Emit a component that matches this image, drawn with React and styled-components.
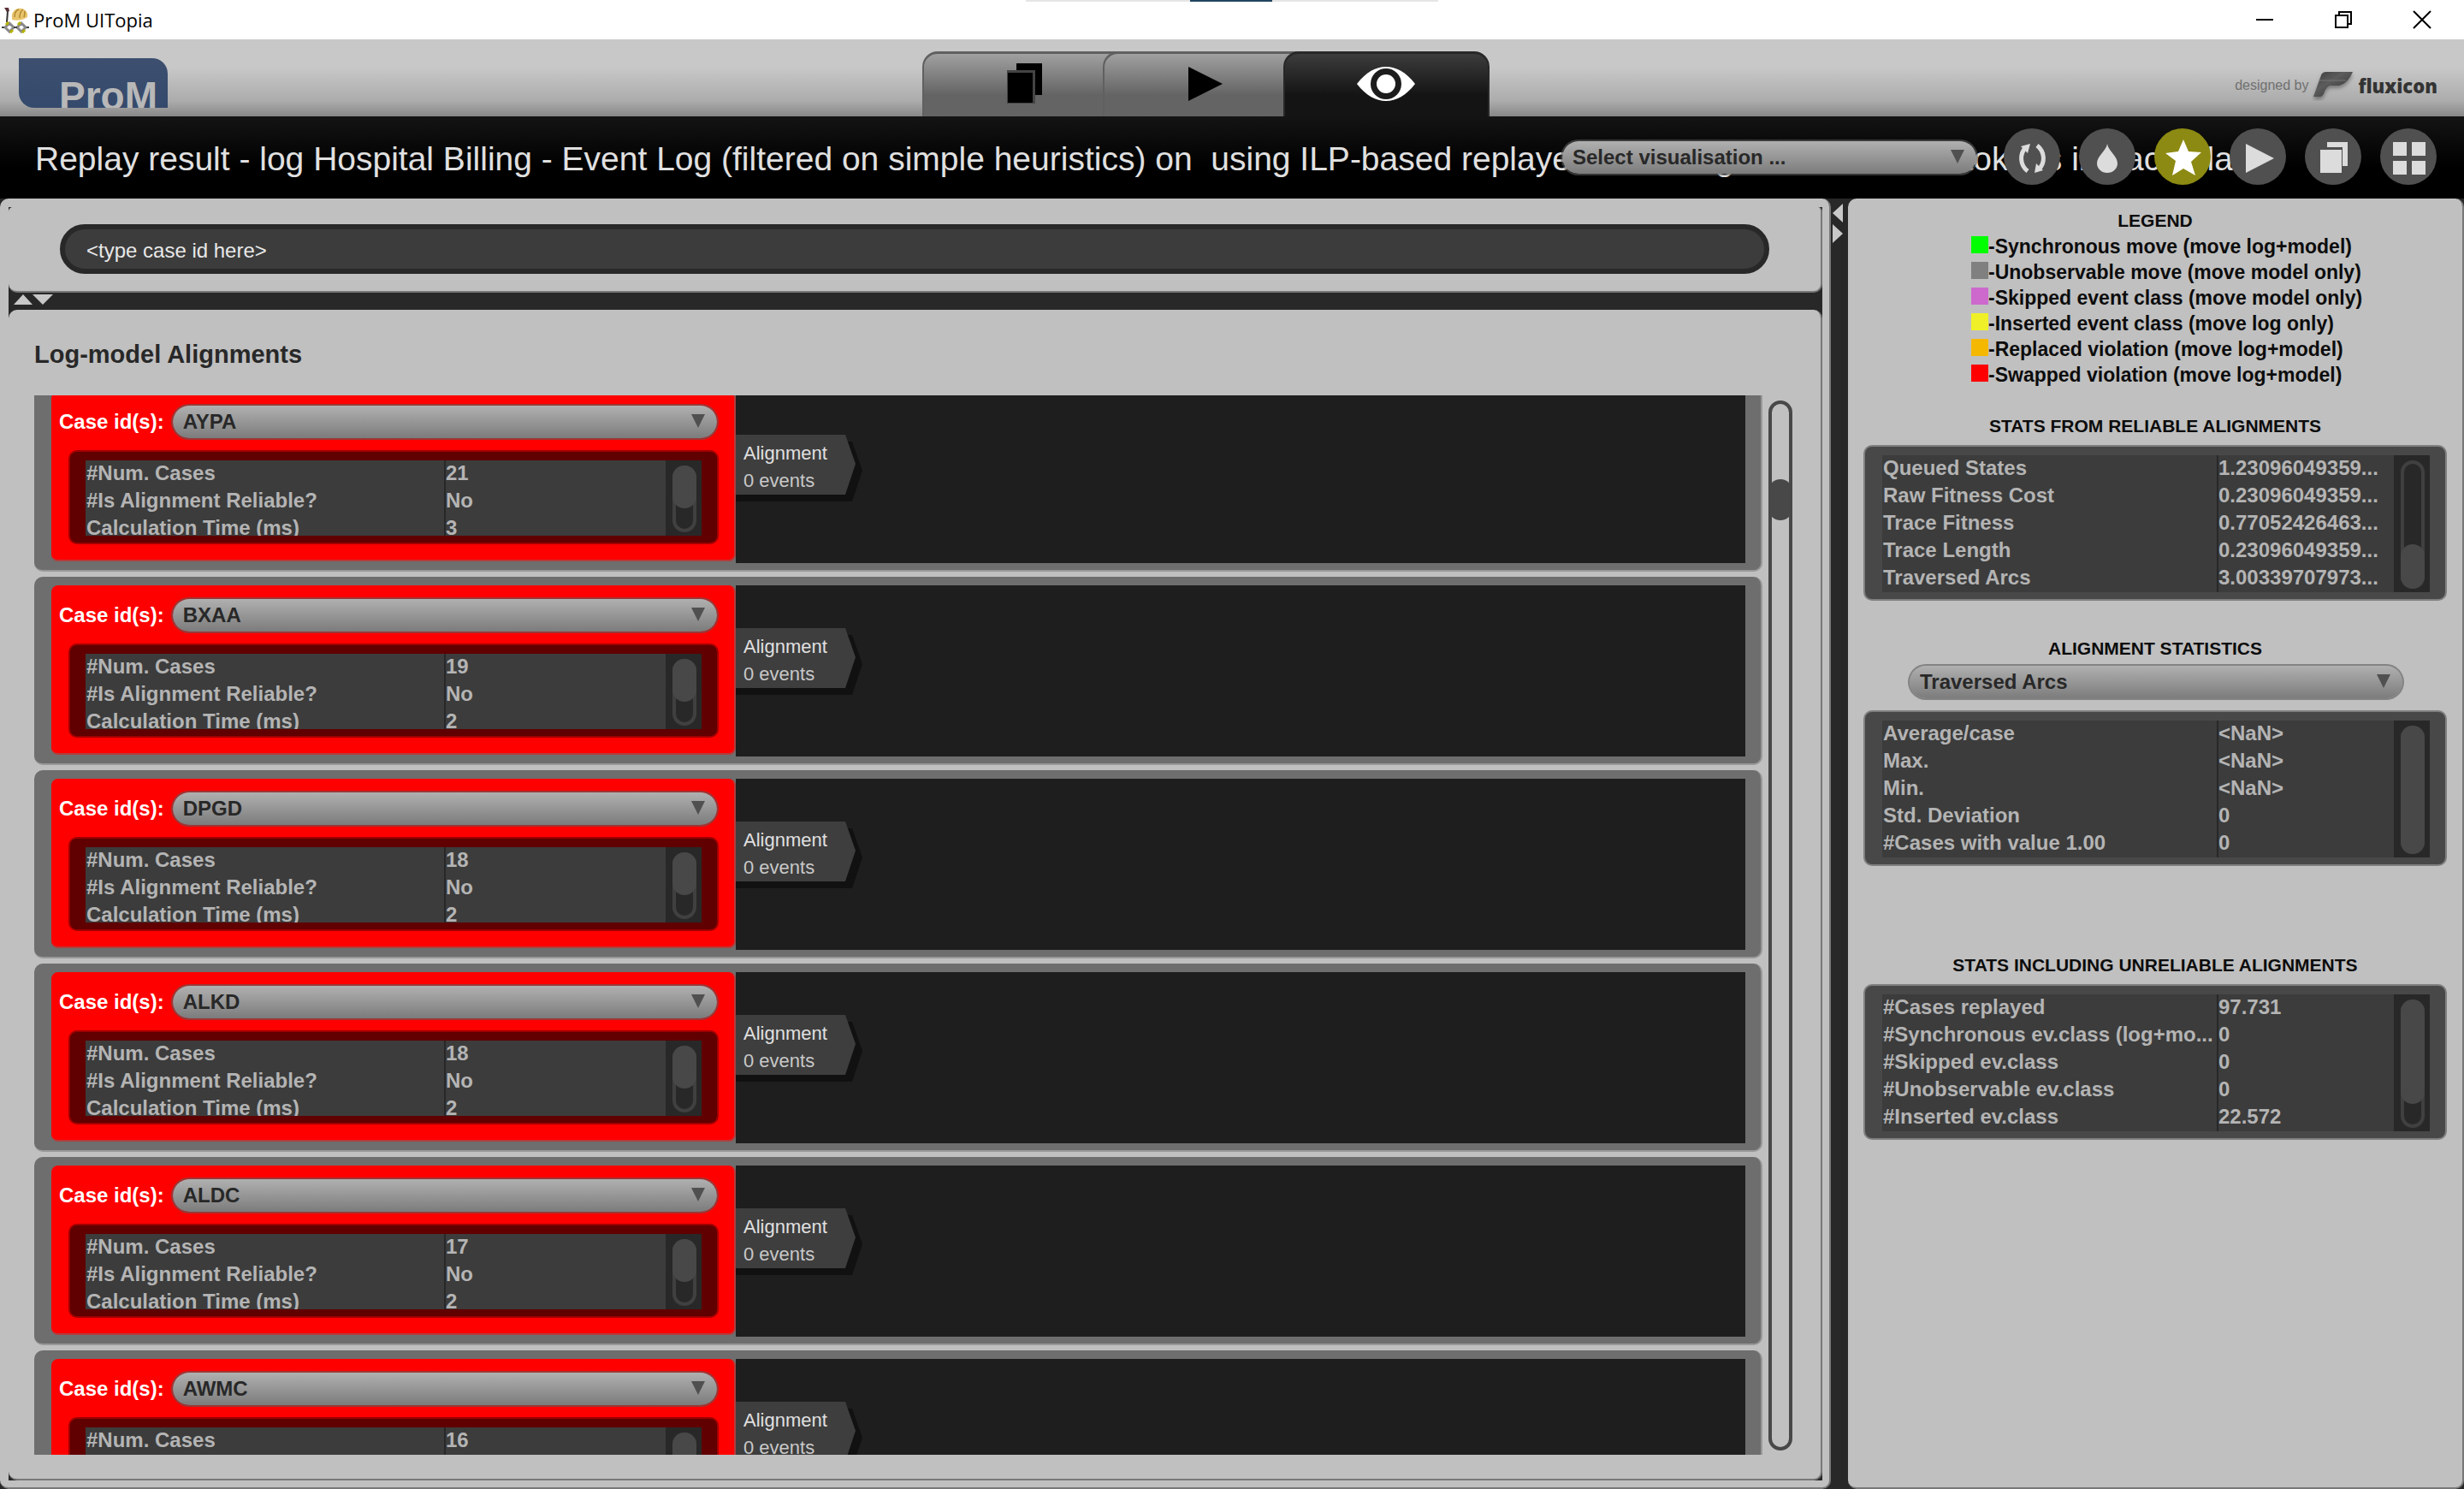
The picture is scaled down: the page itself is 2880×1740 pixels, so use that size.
import React, { useLayoutEffect, useRef } from "react";
import styled, { createGlobalStyle, css } from "styled-components";

const color = {
  panel: "#c0c0c0",
  gap: "#282828",
  edge: "#787878",
  well: "#3c3c3c",
  box: "#484848",
  cell: "#b4b4b4",
};

const GlobalStyle = createGlobalStyle`
  *, *::before, *::after { box-sizing: border-box; }
  body {
    margin: 0;
    background: ${color.gap};
    font-family: "Liberation Sans", Arial, sans-serif;
  }
  button, input, select { font: inherit; margin: 0; }
`;

const Shell = styled.div`
  height: 100vh;
  display: flex;
  flex-direction: column;
  overflow: hidden;
`;

/* ---------- window title bar ---------- */

const TitleBar = styled.header`
  position: relative;
  flex: none;
  height: 46px;
  display: flex;
  align-items: center;
  justify-content: space-between;
  padding: 0 17px 0 2px;
  background: #fff;
`;

const AppName = styled.div`
  display: flex;
  align-items: center;
  gap: 5px;
  font: 22px/32px "Open Sans", "Noto Sans", sans-serif;
  color: #000;
`;

const WindowButtons = styled.div`
  display: flex;
  gap: 28px;
`;

const WindowButton = styled.button`
  width: 64px;
  height: 44px;
  padding: 0;
  border: 0;
  background: none;
  display: grid;
  place-items: center;
`;

const DockHandle = styled.div`
  position: absolute;
  top: 0;
  left: 50%;
  width: 482px;
  height: 2px;
  transform: translateX(-50%);
  background: linear-gradient(90deg, #e5e5e5 192px, #21445f 192px 288px, #e5e5e5 288px);
`;

/* ---------- brand bar with tabs ---------- */

const BrandBar = styled.div`
  flex: none;
  height: 90px;
  display: flex;
  justify-content: space-between;
  padding: 0 31px 0 22px;
  background: linear-gradient(#c8c8c8 0 32px, #acacac 72px, #888888 90px);
`;

const Logo = styled.div`
  width: 174px;
  height: 58px;
  margin-top: 22px;
  padding-left: 47px;
  overflow: hidden;
  border-radius: 0 18px 0 18px;
  background: linear-gradient(#3d4f6f, #344a6c);
  color: #b8b8b8;
  font: bold 46px/72px "Liberation Sans", Arial, sans-serif;
`;

const LogoText = styled.span`
  display: block;
  padding-top: 8px;
`;

const Tabs = styled.nav`
  display: flex;
  align-self: flex-end;
  height: 76px;
  margin-left: 10px;
`;

const Tab = styled.button`
  width: 231px;
  padding: 0 0 4px 8px;
  display: grid;
  place-items: center;
  border: 2px solid #606060;
  border-width: 3px 0 0 2px;
  border-radius: 18px 0 0 0;
  background: linear-gradient(#a0a0a0, #646464 48px);
  & + & { margin-left: -20px; }
  ${(p) =>
    p.$active &&
    css`
      width: 241px;
      padding-left: 0;
      border-color: #282828;
      border-right-width: 2px;
      border-radius: 18px 18px 0 0;
      background: linear-gradient(#3c3c3c, #141414 48px);
    `}
`;

const Credit = styled.div`
  display: flex;
  align-items: center;
  gap: 4px;
  padding-top: 18px;
  font-size: 16px;
  color: #707070;
`;

const CreditName = styled.strong`
  font: 800 22px/28px "Open Sans", sans-serif;
  color: #333;
`;

/* ---------- black heading bar ---------- */

const HeadingBar = styled.div`
  position: relative;
  flex: none;
  height: 96px;
  padding-left: 41px;
  overflow: hidden;
  background: linear-gradient(#141414, #000 60px);
`;

const Heading = styled.h1`
  margin: 0;
  font-size: 39px;
  font-weight: 400;
  line-height: 100px;
  white-space: pre;
  color: #e0e0e0;
`;

const HeadingTools = styled.div`
  position: absolute;
  top: 14px;
  right: 32px;
  display: flex;
  align-items: center;
  gap: 22px;
`;

const RoundButton = styled.button`
  width: 66px;
  height: 66px;
  padding: 0;
  border: 0;
  border-radius: 50%;
  display: grid;
  place-items: center;
  background: ${(p) => (p.$active ? "#8c8a12" : "#505050")};
  svg { display: block; }
`;

const PickerSlot = styled.div`
  width: 488px;
  margin-right: 8px;
  padding-top: 2px;
`;

/* ---------- drop-down ---------- */

const SelectWrap = styled.div`
  position: relative;
  width: 100%;
  height: 42px;
`;

const SelectBox = styled.select`
  appearance: none;
  display: block;
  width: 100%;
  height: 42px;
  padding: 0 48px 0 12px;
  border: 2px solid rgba(90, 90, 90, 0.6);
  border-radius: 21px;
  background: linear-gradient(#b0b0b0, #7c7c7c);
  background-clip: padding-box;
  font-size: 24px;
  font-weight: 700;
  line-height: 38px;
  color: #282828;
`;

const SelectArrow = styled.svg`
  position: absolute;
  right: 16px;
  top: 12px;
  pointer-events: none;
`;

/* ---------- split panes ---------- */

const Workspace = styled.main`
  flex: 1;
  min-height: 0;
  display: grid;
  grid-template-columns: minmax(0, 107fr) 20px minmax(0, 36fr);
  background: ${color.gap};
`;

const paneEdge = css`
  background: ${color.panel};
  border: 0 solid ${color.edge};
  border-width: 0 2px 2px 0;
  border-radius: 10px;
`;

const LeftPane = styled.section`
  ${paneEdge}
  min-height: 0;
  padding: 10px 8px 8px 10px;
`;

const LeftSplit = styled.div`
  height: 100%;
  display: flex;
  flex-direction: column;
  background: ${color.gap};
`;

const SearchPane = styled.div`
  ${paneEdge}
  flex: none;
  padding: 20px 60px;
  border-radius: 5px 5px 10px 10px;
`;

const SearchInput = styled.input`
  display: block;
  width: 100%;
  height: 58px;
  padding: 4px 25px 0;
  border: 6px solid #282828;
  border-radius: 29px;
  background: ${color.well};
  color: #e8e8e8;
  font-size: 24px;
  outline: 0;
`;

const Divider = styled.div`
  flex: none;
  display: flex;
  gap: ${(p) => (p.$vertical ? 2 : 0)}px;
  flex-direction: ${(p) => (p.$vertical ? "column" : "row")};
  padding: ${(p) => (p.$vertical ? "6px 2px" : "2px 6px")};
  height: ${(p) => (p.$vertical ? "auto" : "20px")};
  svg { display: block; }
`;

const ListPane = styled.div`
  ${paneEdge}
  flex: 1;
  min-height: 0;
  display: flex;
  flex-direction: column;
  padding: 32px 30px 28px;
`;

const ListTitle = styled.h2`
  margin: 0 0 28px;
  font-size: 29px;
  line-height: 40px;
  color: #282828;
`;

const ListRow = styled.div`
  flex: 1;
  min-height: 0;
  display: flex;
  gap: 7px;
`;

const Viewport = styled.div`
  flex: 1;
  overflow-y: auto;
  scrollbar-width: none;
  display: flex;
  flex-direction: column;
  gap: 6px;
`;

const ScrollColumn = styled.div`
  width: 28px;
  margin-right: 3px;
  padding: 6px 0 5px;
`;

/* ---------- scroll indicator ---------- */

const Track = styled.div`
  width: 28px;
  height: 100%;
  padding-top: ${(p) => p.$offset}px;
  border: 4px solid ${(p) => p.$line};
  border-radius: 14px;
`;

const Thumb = styled.div`
  width: 28px;
  height: ${(p) => p.$size};
  margin: -4px;
  border-radius: 14px;
  background: ${color.box};
`;

/* ---------- case cards ---------- */

const Card = styled.article`
  flex: none;
  display: flex;
  padding: 10px 18px 8px 20px;
  border: 0 solid #989898;
  border-width: 0 2px 2px 0;
  border-radius: 10px;
  background: #6e6e6e;
`;

const CaseInfo = styled.div`
  width: 800px;
  height: 198px;
  padding: 14px 18px 18px 8px;
  border: 0 solid #b43c3c;
  border-width: 0 2px 2px 0;
  border-radius: 8px;
  background: #f00;
`;

const CaseField = styled.label`
  display: flex;
  align-items: center;
  gap: 8px;
  padding-left: 1px;
  white-space: nowrap;
  color: #fff;
  font-size: 24px;
  font-weight: 700;
`;

const CaseStats = styled.div`
  margin: 12px 0 0 12px;
`;

const Lane = styled.div`
  flex: 1;
  height: 200px;
  padding-top: 50px;
  background: #1e1e1e;
`;

const Tag = styled.div`
  position: relative;
  width: 148px;
  height: 78px;
  svg { position: absolute; left: 0; top: 0; }
`;

const TagText = styled.p`
  position: relative;
  margin: 0;
  padding-left: 9px;
  font-size: 22px;
  line-height: 32px;
  color: ${(p) => (p.$soft ? "#c8c8c8" : "#e0e0e0")};
  &:nth-of-type(1) { padding-top: 6px; }
`;

/* ---------- statistics box ---------- */

const Box = styled.div`
  display: flex;
  height: ${(p) => p.$height}px;
  padding: 10px 18px 8px ${(p) => (p.$alarm ? 18 : 20)}px;
  border: 2px solid ${(p) => (p.$alarm ? "#a00000" : "#808080")};
  border-radius: 10px;
  background: ${(p) => (p.$alarm ? "#600000" : color.box)};
`;

const TableClip = styled.div`
  flex: 1;
  min-width: 0;
  overflow: hidden;
  background: ${color.well};
`;

const Table = styled.table`
  width: 100%;
  table-layout: fixed;
  border-collapse: collapse;
  color: ${color.cell};
  font-size: 24px;
  font-weight: 700;
  line-height: 30px;
`;

const NameCell = styled.th`
  width: ${(p) => p.$width}px;
  height: 32px;
  padding: 0 0 2px 1px;
  border-right: 2px solid ${color.gap};
  text-align: left;
  white-space: nowrap;
  overflow: hidden;
`;

const ValueCell = styled.td`
  padding: 0 0 2px;
  white-space: nowrap;
  overflow: hidden;
`;

const Gutter = styled.div`
  width: 42px;
  padding: 6px 6px 4px 8px;
  background: ${color.gap};
`;

/* ---------- right pane ---------- */

const RightPane = styled.aside`
  ${paneEdge}
  min-height: 0;
  overflow: hidden;
  padding: 11px 18px;
  font-size: 21px;
  line-height: 30px;
  color: #0c0c0c;
`;

const Group = styled.section`
  margin-bottom: ${(p) => p.$space}px;
`;

const GroupTitle = styled.h3`
  margin: 0;
  font-size: 21px;
  line-height: 30px;
  text-align: center;
  padding-bottom: ${(p) => (p.$roomy ? 7 : 0)}px;
`;

const Legend = styled.ul`
  width: 430px;
  margin: 0 auto;
  padding: 0;
  list-style: none;
  font-size: 23px;
  font-weight: 700;
  white-space: nowrap;
`;

const LegendItem = styled.li`
  display: flex;
  align-items: flex-start;
  line-height: 30px;
`;

const Swatch = styled.span`
  flex: none;
  width: 20px;
  height: 20px;
  margin-top: 3px;
  background: ${(p) => p.$fill};
`;

const StatPicker = styled.div`
  margin: 3px 50px 12px 52px;
`;

/* ---------- drawings ---------- */

const AppIcon = () => (
  <svg width="32" height="32" viewBox="0 0 32 32" fill="none">
    <path d="M3 2h5l1 4-3 1z" fill="#5a3038" />
    <path d="M7 6l-1 13" stroke="#333" strokeWidth="2" />
    <path d="M12 14c-1-8 5-12 11-11 6 1 8 6 7 10-4 3-12 5-18 3z" fill="#e8c46c" />
    <path d="M15 13c0-5 2-8 5-9M21 14c0-5 1-8 4-10M26 13c1-3 1-5 1-7" stroke="#b08a30" strokeWidth="1.5" />
    <path d="M9 20l5 5-5 5-5-5zM23 20l5 5-5 5-5-5z" fill="#fff" stroke="#8a8a8a" strokeWidth="3" />
    <path d="M5 22l3-3M13 28l-3 3M19 22l3-3M27 28l-3 3" stroke="#b4b000" strokeWidth="3" />
    <path d="M0 25h3M29 25h3M14 25h4" stroke="#444" strokeWidth="2" />
  </svg>
);

const MinimizeIcon = () => (
  <svg width="22" height="22" viewBox="0 0 22 22"><path d="M1 11h20" stroke="#000" strokeWidth="2" /></svg>
);
const RestoreIcon = () => (
  <svg width="22" height="22" viewBox="0 0 22 22" fill="none" stroke="#000" strokeWidth="2">
    <path d="M2 6h14v14H2zM6 6V2h14v14h-4" />
  </svg>
);
const CloseIcon = () => (
  <svg width="22" height="22" viewBox="0 0 22 22"><path d="M1 1l20 20M21 1L1 21" stroke="#000" strokeWidth="2" /></svg>
);

const TabFilesIcon = () => (
  <svg width="42" height="50" viewBox="0 0 42 50">
    <path d="M11 1h30v37H11z" fill="#000" />
    <path d="M0 9h33v39H0z" fill="#444" />
    <path d="M1 12h29v35H1z" fill="#000" />
  </svg>
);
const TabPlayIcon = () => (
  <svg width="42" height="42" viewBox="0 0 42 42"><path d="M1 1l40 20L1 41z" fill="#000" /></svg>
);
const EyeIcon = () => (
  <svg width="70" height="44" viewBox="0 0 70 44">
    <path d="M1 22C12 8 23 2 35 2s23 6 34 20C58 36 47 42 35 42S12 36 1 22z" fill="#fff" />
    <circle cx="35" cy="22" r="18" fill="#1c1c1c" />
    <circle cx="35" cy="22" r="11" fill="#fff" />
  </svg>
);

const FluxIcon = () => (
  <svg width="50" height="36" viewBox="0 0 50 36">
    <defs>
      <linearGradient id="flux" x1="0" x2="1" y1="0" y2="1">
        <stop offset="0" stopColor="#3c3c3c" />
        <stop offset="0.400" stopColor="#5c5c5c" />
        <stop offset="1" stopColor="#2c2c2c" />
      </linearGradient>
      <filter id="fluxShadow" x="-20%" y="-20%" width="140%" height="150%">
        <feDropShadow dx="0" dy="3" stdDeviation="2" floodOpacity="0.350" />
      </filter>
    </defs>
    <path
      d="M11 6c1-3 3-4 6-4h31c-3 7-8 14-16 16H22c-4 1-5 4-7 7-1 4-3 6-6 6H2z"
      fill="url(#flux)"
      filter="url(#fluxShadow)"
    />
    <path d="M9 12h31" stroke="#777" strokeWidth="1" />
  </svg>
);

const RefreshIcon = () => (
  <svg width="66" height="66" viewBox="0 0 66 66" fill="none" stroke="#dcdcdc" strokeWidth="5">
    <path d="M28 50c-9-7-10-20-2-28M39 20c9 7 10 20 2 28" />
    <path d="M20 21l11-3-3 11zM36 52l2-11 8 8z" fill="#dcdcdc" stroke="none" />
  </svg>
);
const DropIcon = () => (
  <svg width="66" height="66" viewBox="0 0 66 66">
    <path d="M33 18c1 8 12 14 12 23a12 11 0 0 1-24 0c0-9 11-15 12-23z" fill="#dcdcdc" />
  </svg>
);
const StarIcon = () => (
  <svg width="66" height="66" viewBox="0 0 66 66">
    <path d="M34 13l6 14 15 1-12 11 5 16-14-8-13 8 4-17-12-9 15-2z" fill="#fff" />
  </svg>
);
const PlayIcon = () => (
  <svg width="66" height="66" viewBox="0 0 66 66"><path d="M19 18l33 17-33 17z" fill="#dcdcdc" /></svg>
);
const FilesIcon = () => (
  <svg width="66" height="66" viewBox="0 0 66 66" fill="#dcdcdc">
    <path d="M26 16h24v28h-6V22H26z" />
    <path d="M18 25h25v27H18z" />
  </svg>
);
const GridIcon = () => (
  <svg width="66" height="66" viewBox="0 0 66 66" fill="#dcdcdc">
    <path d="M15 16h16v16H15zM37 16h16v16H37zM15 38h16v16H15zM37 38h16v16H37z" />
  </svg>
);

const Arrow = ({ d, w, h }) => (
  <svg width={w} height={h} viewBox={`0 0 ${w} ${h}`}><path d={d} fill="#c8c8c8" /></svg>
);

/* ---------- data ---------- */

const cases = [
  ["AYPA", "21", "3"],
  ["BXAA", "19", "2"],
  ["DPGD", "18", "2"],
  ["ALKD", "18", "2"],
  ["ALDC", "17", "2"],
  ["AWMC", "16", "2"],
];

const legend = [
  ["#00ff00", "-Synchronous move (move log+model)"],
  ["#808080", "-Unobservable move (move model only)"],
  ["#cd69cd", "-Skipped event class (move model only)"],
  ["#f0f028", "-Inserted event class (move log only)"],
  ["#f5b800", "-Replaced violation (move log+model)"],
  ["#ff0000", "-Swapped violation (move log+model)"],
];

const reliable = [
  ["Queued States", "1.23096049359..."],
  ["Raw Fitness Cost", "0.23096049359..."],
  ["Trace Fitness", "0.77052426463..."],
  ["Trace Length", "0.23096049359..."],
  ["Traversed Arcs", "3.00339707973..."],
];

const alignment = [
  ["Average/case", "<NaN>"],
  ["Max.", "<NaN>"],
  ["Min.", "<NaN>"],
  ["Std. Deviation", "0"],
  ["#Cases with value 1.00", "0"],
];

const unreliable = [
  ["#Cases replayed", "97.731"],
  ["#Synchronous ev.class (log+mo...", "0"],
  ["#Skipped ev.class", "0"],
  ["#Unobservable ev.class", "0"],
  ["#Inserted ev.class", "22.572"],
];

const tools = [
  ["Refresh", RefreshIcon],
  ["Colour", DropIcon],
  ["Favourite", StarIcon],
  ["Run action", PlayIcon],
  ["Show resource", FilesIcon],
  ["Overview", GridIcon],
];

/* ---------- composed parts ---------- */

function Dropdown({ value, ...rest }) {
  return (
    <SelectWrap>
      <SelectBox defaultValue={value} {...rest}>
        <option>{value}</option>
      </SelectBox>
      <SelectArrow width="16" height="16" viewBox="0 0 16 16">
        <path d="M0 0h16L8 16z" fill="#505050" />
      </SelectArrow>
    </SelectWrap>
  );
}

function Scroll({ offset = 0, size = "50px", line = "#404040" }) {
  return (
    <Track $offset={offset} $line={line}>
      <Thumb $size={size} />
    </Track>
  );
}

function StatsBox({ rows, nameWidth, height, alarm, offset, size }) {
  return (
    <Box $height={height} $alarm={alarm}>
      <TableClip>
        <Table>
          <tbody>
            {rows.map(([name, value]) => (
              <tr key={name}>
                <NameCell scope="row" $width={nameWidth}>{name}</NameCell>
                <ValueCell>{value}</ValueCell>
              </tr>
            ))}
          </tbody>
        </Table>
      </TableClip>
      <Gutter><Scroll offset={offset} size={size} /></Gutter>
    </Box>
  );
}

function CaseCard({ id, count, time }) {
  return (
    <Card>
      <CaseInfo>
        <CaseField>
          Case id(s):
          <Dropdown value={id} />
        </CaseField>
        <CaseStats>
          <StatsBox
            alarm
            height={110}
            nameWidth={420}
            rows={[
              ["#Num. Cases", count],
              ["#Is Alignment Reliable?", "No"],
              ["Calculation Time (ms)", time],
            ]}
            size="50px"
          />
        </CaseStats>
      </CaseInfo>
      <Lane>
        <Tag>
          <svg width="148" height="78" viewBox="0 0 148 78" overflow="visible">
            <path d="M0 8h136l12 34-12 36H0z" fill="#111" />
            <path d="M0 0h128l12 34-12 36H0z" fill="#3e3e3e" />
          </svg>
          <TagText>Alignment</TagText>
          <TagText $soft>0 events</TagText>
        </Tag>
      </Lane>
    </Card>
  );
}

function CaseList() {
  const view = useRef(null);
  useLayoutEffect(() => {
    view.current.scrollTop = 14;
  }, []);
  return (
    <ListRow>
      <Viewport ref={view}>
        {cases.map(([id, count, time]) => (
          <CaseCard key={id} id={id} count={count} time={time} />
        ))}
      </Viewport>
      <ScrollColumn>
        <Scroll line={color.box} offset={92} size="48px" />
      </ScrollColumn>
    </ListRow>
  );
}

export default function App() {
  return (
    <Shell>
      <GlobalStyle />
      <TitleBar>
        <AppName><AppIcon />ProM UITopia</AppName>
        <DockHandle />
        <WindowButtons>
          <WindowButton aria-label="Minimize"><MinimizeIcon /></WindowButton>
          <WindowButton aria-label="Restore"><RestoreIcon /></WindowButton>
          <WindowButton aria-label="Close"><CloseIcon /></WindowButton>
        </WindowButtons>
      </TitleBar>

      <BrandBar>
        <Logo><LogoText>ProM</LogoText></Logo>
        <Tabs>
          <Tab aria-label="Workspace"><TabFilesIcon /></Tab>
          <Tab aria-label="Actions"><TabPlayIcon /></Tab>
          <Tab aria-label="Views" $active><EyeIcon /></Tab>
        </Tabs>
        <Credit>designed by <FluxIcon /><CreditName>fluxicon</CreditName></Credit>
      </BrandBar>

      <HeadingBar>
        <Heading>
          {"Replay result - log Hospital Billing - Event Log (filtered on simple heuristics) on  using ILP-based replayer assuming at most 32767 tokens in each place."}
        </Heading>
        <HeadingTools>
          <PickerSlot><Dropdown value="Select visualisation ..." aria-label="Visualisation" /></PickerSlot>
          {tools.map(([name, Icon]) => (
            <RoundButton key={name} aria-label={name} $active={name === "Favourite"}><Icon /></RoundButton>
          ))}
        </HeadingTools>
      </HeadingBar>

      <Workspace>
        <LeftPane>
          <LeftSplit>
            <SearchPane>
              <SearchInput aria-label="Case id" defaultValue="<type case id here>" />
            </SearchPane>
            <Divider>
              <Arrow w={22} h={12} d="M0 12L11 0l11 12z" />
              <Arrow w={24} h={12} d="M0 0h24L12 12z" />
            </Divider>
            <ListPane>
              <ListTitle>Log-model Alignments</ListTitle>
              <CaseList />
            </ListPane>
          </LeftSplit>
        </LeftPane>

        <Divider $vertical>
          <Arrow w={12} h={22} d="M12 0v22L0 11z" />
          <Arrow w={12} h={22} d="M0 0v22l12-11z" />
        </Divider>

        <RightPane>
          <Group $space={30}>
            <GroupTitle>LEGEND</GroupTitle>
            <Legend>
              {legend.map(([fill, text]) => (
                <LegendItem key={text}><Swatch $fill={fill} />{text}</LegendItem>
              ))}
            </Legend>
          </Group>
          <Group $space={41}>
            <GroupTitle $roomy>STATS FROM RELIABLE ALIGNMENTS</GroupTitle>
            <StatsBox rows={reliable} height={182} nameWidth={392} offset={98} size="52px" />
          </Group>
          <Group $space={101}>
            <GroupTitle>ALIGNMENT STATISTICS</GroupTitle>
            <StatPicker><Dropdown value="Traversed Arcs" aria-label="Statistic" /></StatPicker>
            <StatsBox rows={alignment} height={182} nameWidth={392} size="150px" />
          </Group>
          <Group $space={0}>
            <GroupTitle $roomy>STATS INCLUDING UNRELIABLE ALIGNMENTS</GroupTitle>
            <StatsBox rows={unreliable} height={182} nameWidth={392} size="122px" />
          </Group>
        </RightPane>
      </Workspace>
    </Shell>
  );
}
